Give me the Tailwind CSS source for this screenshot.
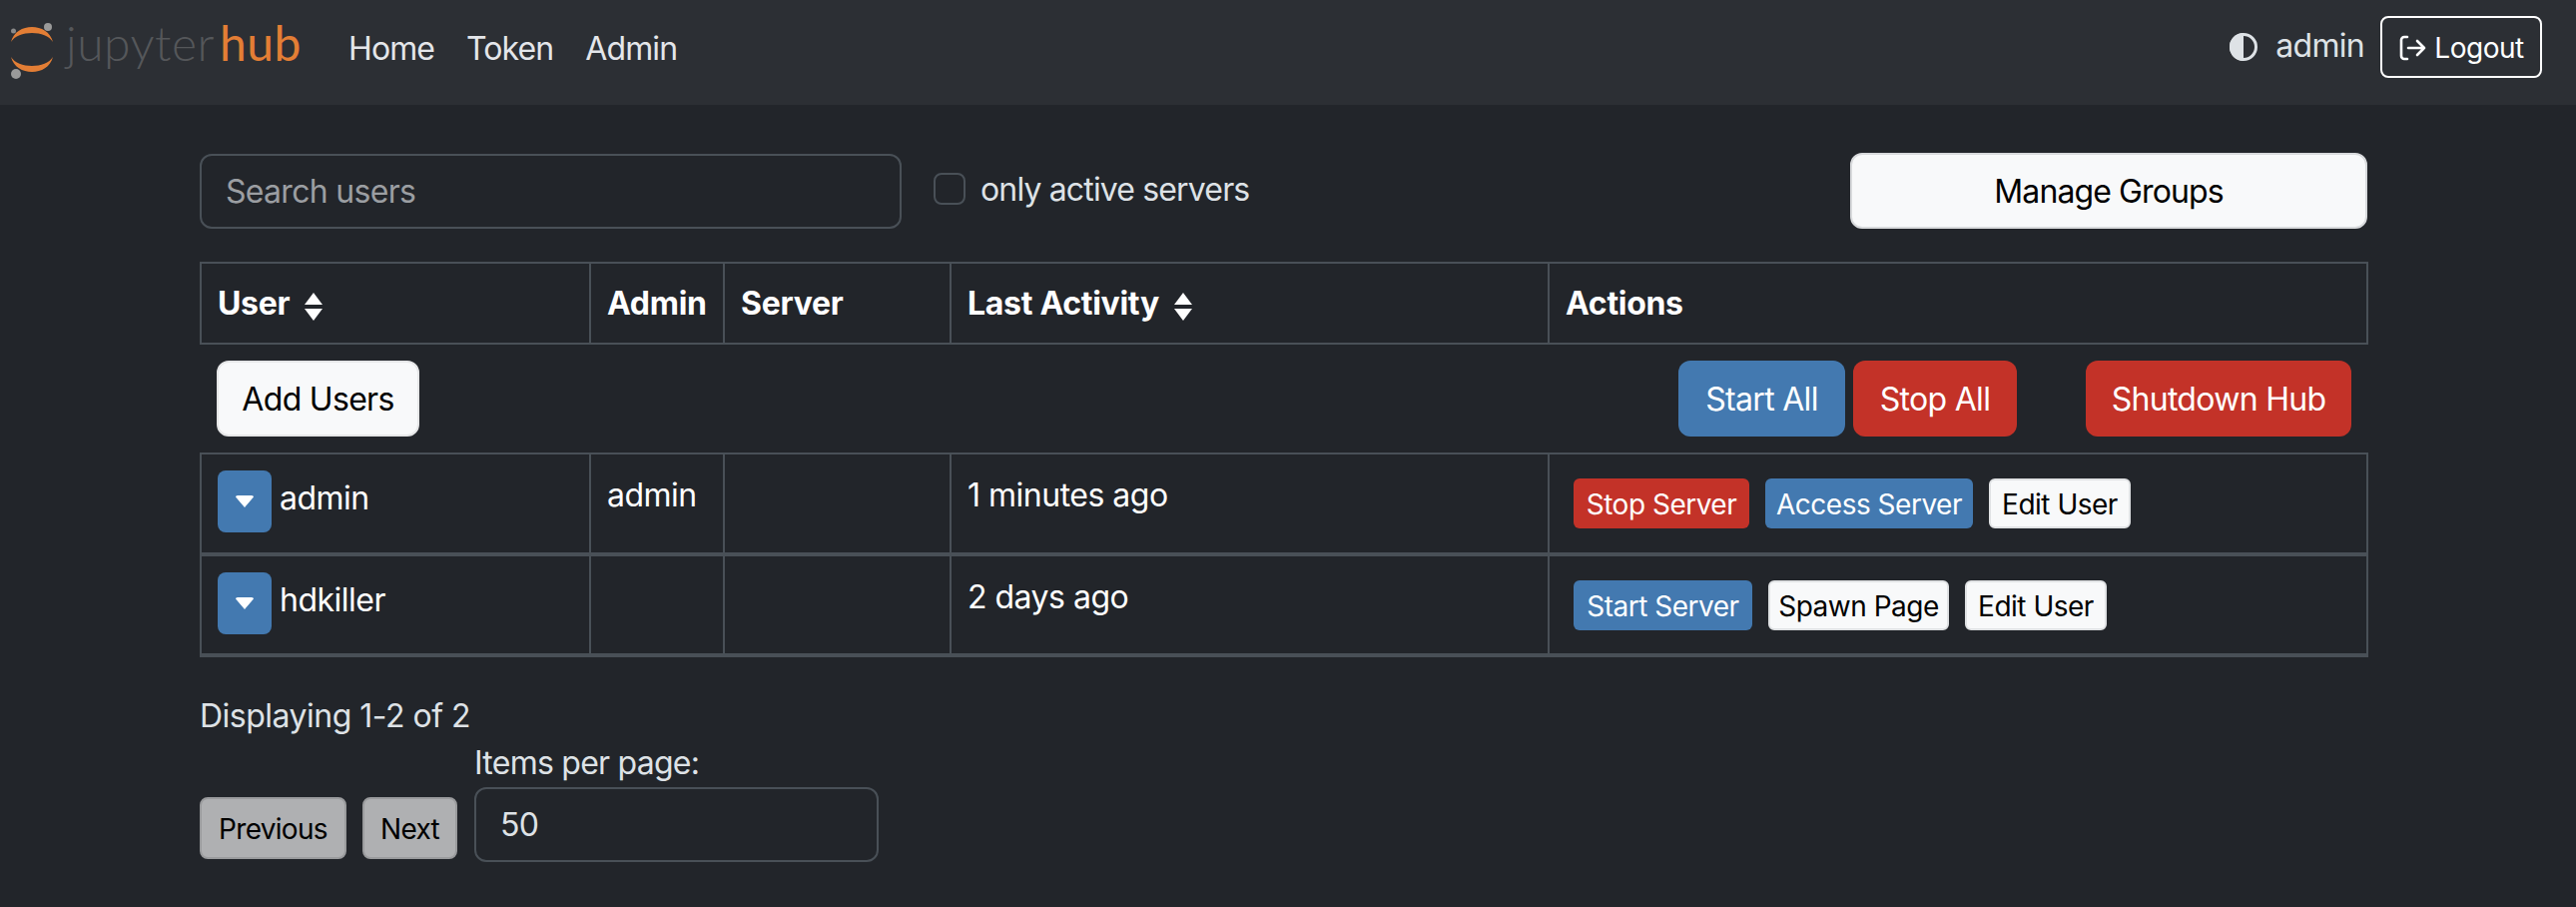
<!DOCTYPE html>
<html>
<head>
<meta charset="utf-8">
<script src="https://cdn.jsdelivr.net/npm/@tailwindcss/browser@4"></script>
</head>
<body class="bg-[#22252a] text-[#dee2e6] font-['Inter','Liberation_Sans',sans-serif] text-[32px] tracking-[-0.7px] h-[908px] overflow-hidden">
<nav class="h-[105px] bg-[#2c2f34] flex items-center pl-[11px] pr-[34px]">
  <div class="flex items-start w-[338px] h-[105px] relative">
    <svg class="w-[50px] h-[105px] shrink-0" viewBox="0 0 50 105">
      <circle cx="37" cy="27" r="4" fill="#9a9a9a"/>
      <circle cx="2.5" cy="31" r="2.5" fill="#8a8a8a"/>
      <circle cx="5" cy="74" r="5" fill="#9a9a9a"/>
      <path d="M0 42C5 22 37 22 42 42C35 30 7 30 0 42Z" fill="#e37e35"/>
      <path d="M0 57C5 77 37 77 42 57C35 69 7 69 0 57Z" fill="#e37e35"/>
    </svg>
    <div class="ml-[5px] mt-[15px] flex font-['Lato',sans-serif] font-light text-[48px] leading-[56px] tracking-[0.5px] whitespace-nowrap"><span class="text-[#55575a]">jupyter</span><span class="text-[#e37e35] ml-[5px] font-normal">hub</span></div>
  </div>
  <div class="flex gap-[32px] text-[#e4e6ea] -mt-[8px] tracking-[-0.9px]">
    <span>Home</span><span>Token</span><span>Admin</span>
  </div>
  <div class="ml-auto flex items-center">
    <svg class="w-[28px] h-[28px] mr-[18px] -mt-[12px]" viewBox="0 0 28 28"><circle cx="14" cy="14" r="12.5" fill="none" stroke="#dee2e6" stroke-width="3"/><path d="M14 0a14 14 0 0 0 0 28Z" fill="#dee2e6"/></svg>
    <span class="mr-[16px] -mt-[14px]">admin</span>
    <button class="w-[162px] h-[62px] pt-[1px] border-2 border-white rounded-[8px] text-white text-[28px] tracking-[-0.5px] -mt-[11px] flex items-center justify-center gap-[8px]">
      <svg class="w-[28px] h-[28px]" viewBox="0 0 28 28" fill="none" stroke="#fff" stroke-width="2.6" stroke-linecap="round" stroke-linejoin="round"><path d="M9 3H6a3 3 0 0 0-3 3v16a3 3 0 0 0 3 3h3"/><path d="M10 14h16M19 7l7 7-7 7"/></svg>
      <span>Logout</span>
    </button>
  </div>
</nav>
<main class="ml-[200px] w-[2171px] pt-[48px]">
  <div class="flex items-center h-[76px]">
    <div class="w-[703px] h-[75px] border-2 border-[#495057] rounded-[12px] flex items-center px-[24px] pt-[2px] text-[#9b9ea2]">Search users</div>
    <div class="w-[32px] h-[32px] border-2 border-[#495057] rounded-[8px] ml-[32px] -mt-[4px]"></div>
    <span class="ml-[15px] -mt-[2px] tracking-[-0.85px]">only active servers</span>
    <button class="ml-auto w-[518px] h-[76px] pt-[2px] bg-[#f8f9fa] border-2 border-[#d8dadc] rounded-[12px] text-black tracking-[-0.9px]">Manage Groups</button>
  </div>
  <table class="mt-[33px] w-[2170px] table-fixed border-collapse tracking-[-0.5px]">
    <colgroup><col class="w-[390px]"><col class="w-[134px]"><col class="w-[227px]"><col class="w-[599px]"><col class="w-[820px]"></colgroup>
    <thead>
      <tr class="h-[81px] text-white font-bold text-left tracking-[-0.3px]">
        <th class="border-2 border-[#495057] px-[16px]"><span class="flex items-center gap-[14px]">User
          <svg class="w-[20px] h-[28px] mt-[6px]" viewBox="0 0 20 28" fill="#fff"><path d="M10 0l9 12H1z"/><path d="M10 28l9-12H1z"/></svg></span></th>
        <th class="border-2 border-[#495057] px-[16px] whitespace-nowrap">Admin</th>
        <th class="border-2 border-[#495057] px-[16px]">Server</th>
        <th class="border-2 border-[#495057] px-[16px]"><span class="flex items-center gap-[14px]">Last Activity
          <svg class="w-[20px] h-[28px] mt-[6px]" viewBox="0 0 20 28" fill="#fff"><path d="M10 0l9 12H1z"/><path d="M10 28l9-12H1z"/></svg></span></th>
        <th class="border-2 border-[#495057] px-[16px]">Actions</th>
      </tr>
    </thead>
    <tbody>
      <tr class="h-[110px]">
        <td colspan="5" class="px-[16px]">
          <div class="flex items-center h-[76px] tracking-[-0.7px]">
            <button class="w-[203px] h-[76px] pt-[2px] bg-[#f8f9fa] border-2 border-[#e6e7e8] rounded-[12px] text-black">Add Users</button>
            <button class="ml-auto w-[167px] h-[76px] pt-[2px] bg-[#4379b0] rounded-[12px] text-white">Start All</button>
            <button class="ml-[8px] w-[164px] h-[76px] pt-[2px] bg-[#c33228] rounded-[12px] text-white">Stop All</button>
            <button class="ml-[69px] w-[266px] h-[76px] pt-[2px] bg-[#c33228] rounded-[12px] text-white">Shutdown Hub</button>
          </div>
        </td>
      </tr>
      <tr class="h-[101px] align-top">
        <td class="border-x-2 border-t-2 border-b-4 border-[#495057] pl-[16px] pt-[16px]">
          <div class="flex items-center gap-[8px]">
            <button class="w-[54px] h-[62px] bg-[#4379b0] rounded-[8px] flex items-center justify-center"><svg class="w-[18px] h-[12px]" viewBox="0 0 18 12" fill="#fff"><path d="M9 12L0 1.5Q0 0 2 0h14q2 0 2 1.5z"/></svg></button>
            <span class="text-white -mt-[6px]">admin</span>
          </div>
        </td>
        <td class="border-x-2 border-t-2 border-b-4 border-[#495057] px-[16px] pt-[17px] text-white">admin</td>
        <td class="border-x-2 border-t-2 border-b-4 border-[#495057]"></td>
        <td class="border-x-2 border-t-2 border-b-4 border-[#495057] px-[16px] pt-[17px] text-white">1 minutes ago</td>
        <td class="border-x-2 border-t-2 border-b-4 border-[#495057] pl-[24px] pt-[24px]">
          <div class="flex gap-[16px] text-[28px]">
            <button class="w-[176px] h-[50px] pt-[1px] bg-[#c33228] rounded-[6px] text-white">Stop Server</button>
            <button class="w-[208px] h-[50px] pt-[1px] bg-[#4379b0] rounded-[6px] text-white">Access Server</button>
            <button class="w-[142px] h-[50px] pt-[1px] bg-[#f8f9fa] border-2 border-[#e0e2e4] rounded-[6px] text-black">Edit User</button>
          </div>
        </td>
      </tr>
      <tr class="h-[101px] align-top">
        <td class="border-x-2 border-t-2 border-b-4 border-[#495057] pl-[16px] pt-[16px]">
          <div class="flex items-center gap-[8px]">
            <button class="w-[54px] h-[62px] bg-[#4379b0] rounded-[8px] flex items-center justify-center"><svg class="w-[18px] h-[12px]" viewBox="0 0 18 12" fill="#fff"><path d="M9 12L0 1.5Q0 0 2 0h14q2 0 2 1.5z"/></svg></button>
            <span class="text-white -mt-[6px]">hdkiller</span>
          </div>
        </td>
        <td class="border-x-2 border-t-2 border-b-4 border-[#495057]"></td>
        <td class="border-x-2 border-t-2 border-b-4 border-[#495057]"></td>
        <td class="border-x-2 border-t-2 border-b-4 border-[#495057] px-[16px] pt-[17px] text-white">2 days ago</td>
        <td class="border-x-2 border-t-2 border-b-4 border-[#495057] pl-[24px] pt-[24px]">
          <div class="flex gap-[16px] text-[28px]">
            <button class="w-[179px] h-[50px] pt-[1px] bg-[#4379b0] rounded-[6px] text-white">Start Server</button>
            <button class="w-[181px] h-[50px] pt-[1px] bg-[#f8f9fa] border-2 border-[#e0e2e4] rounded-[6px] text-black">Spawn Page</button>
            <button class="w-[142px] h-[50px] pt-[1px] bg-[#f8f9fa] border-2 border-[#e0e2e4] rounded-[6px] text-black">Edit User</button>
          </div>
        </td>
      </tr>
    </tbody>
  </table>
  <div class="mt-[40px] leading-[38px] tracking-[-0.5px]">Displaying 1-2 of 2</div>
  <div class="flex items-end mt-[9px]">
    <button class="w-[147px] h-[62px] pt-[1px] bg-[#afb0b2] border-2 border-[#9a9b9d] rounded-[8px] text-black text-[28px] mb-[3px]">Previous</button>
    <button class="ml-[16px] w-[95px] h-[62px] pt-[1px] bg-[#afb0b2] border-2 border-[#9a9b9d] rounded-[8px] text-black text-[28px] mb-[3px]">Next</button>
    <div class="ml-[17px] flex flex-col">
      <span class="leading-[38px] mb-[5px] tracking-[-0.75px]">Items per page:</span>
      <div class="w-[405px] h-[75px] border-2 border-[#495057] rounded-[12px] flex items-center px-[24px]">50</div>
    </div>
  </div>
</main>
</body>
</html>
